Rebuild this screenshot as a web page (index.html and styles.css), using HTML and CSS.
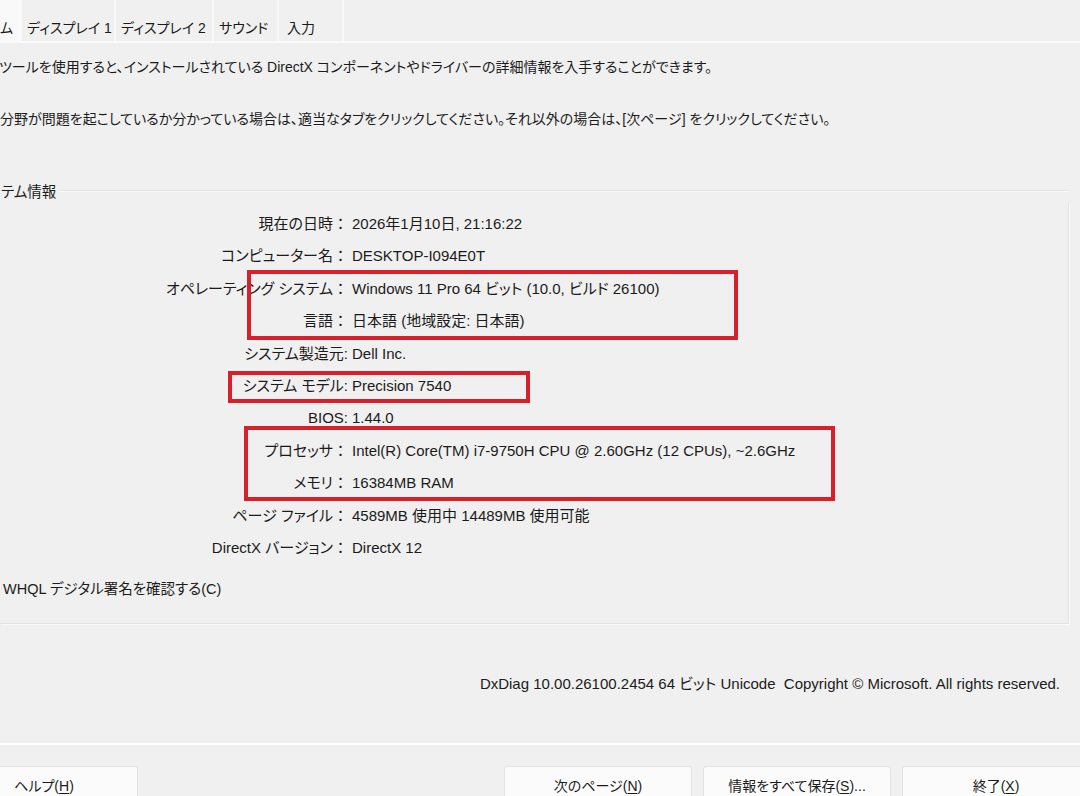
FILE: index.html
```html
<!doctype html>
<html lang="ja">

<head>
  <meta charset="utf-8">
  <title>DirectX 診断ツール</title>
  <meta name="viewport" content="width=device-width, initial-scale=1">
  <link rel="stylesheet" href="styles.css">
</head>

<body>
  <div class="window">

    <ul class="tabs">
      <li class="tab tab_active">ム</li>
      <li class="tab tab_display1">ディスプレイ 1</li>
      <li class="tab tab_display2">ディスプレイ 2</li>
      <li class="tab tab_sound">サウンド</li>
      <li class="tab tab_input">入力</li>
    </ul>

    <div class="panel">
      <p class="intro intro_first">ツールを使用すると、インストールされている DirectX コンポーネントやドライバーの詳細情報を入手することができます。</p>
      <p class="intro intro_second">分野が問題を起こしているか分かっている場合は、適当なタブをクリックしてください。それ以外の場合は、[次ページ] をクリックしてください。</p>

      <div class="group">
        <div class="group_head">
          <span class="group_title">テム情報</span>
          <span class="group_rule"></span>
        </div>
        <div class="group_body">
          <dl class="info">
            <dt>現在の日時<span class="colon">：</span></dt><dd>2026年1月10日, 21:16:22</dd>
            <dt>コンピューター名<span class="colon">：</span></dt><dd>DESKTOP-I094E0T</dd>
            <dt>オペレーティング システム<span class="colon">：</span></dt><dd>Windows 11 Pro 64 ビット (10.0, ビルド 26100)</dd>
            <dt>言語<span class="colon">：</span></dt><dd>日本語 (地域設定: 日本語)</dd>
            <dt>システム製造元:</dt><dd>Dell Inc.</dd>
            <dt>システム モデル:</dt><dd>Precision 7540</dd>
            <dt>BIOS:</dt><dd>1.44.0</dd>
            <dt>プロセッサ<span class="colon">：</span></dt><dd>Intel(R) Core(TM) i7-9750H CPU @ 2.60GHz (12 CPUs), ~2.6GHz</dd>
            <dt>メモリ<span class="colon">：</span></dt><dd>16384MB RAM</dd>
            <dt>ページ ファイル<span class="colon">：</span></dt><dd>4589MB 使用中 14489MB 使用可能</dd>
            <dt>DirectX バージョン<span class="colon">：</span></dt><dd>DirectX 12</dd>
          </dl>
          <p class="whql">WHQL デジタル署名を確認する(C)</p>
        </div>
      </div>

      <p class="version">DxDiag 10.00.26100.2454 64 ビット Unicode&nbsp; Copyright © Microsoft. All rights reserved.</p>
    </div>

    <div class="buttons">
      <button class="btn">ヘルプ(<u>H</u>)</button>
      <span class="buttons_space"></span>
      <button class="btn">次のページ(<u>N</u>)</button>
      <button class="btn">情報をすべて保存(<u>S</u>)...</button>
      <button class="btn">終了(<u>X</u>)</button>
    </div>

    <!-- annotation boxes -->
    <div class="mark mark_os"></div>
    <div class="mark mark_model"></div>
    <div class="mark mark_cpu"></div>
  </div>
</body>

</html>
```

FILE: styles.css
```css
* {
  margin: 0;
  padding: 0;
  box-sizing: border-box;
}

html,
body {
  background: #f0f0f0;
}

body {
  font-family: "Liberation Sans", "Noto Sans CJK JP", sans-serif;
  font-size: 15px;
  line-height: 22px;
  color: #1b1b1b;
  font-feature-settings: "palt";
}

.window {
  position: relative;
  width: 1080px;
  height: 796px;
  overflow: hidden;
}

/* tabs */

.tabs {
  display: flex;
  height: 41px;
  list-style: none;
  font-size: 14px;
}

.tab {
  padding: 17px 0 0 5px;
  background: #f0f0f0;
  border-right: 2px solid #f8f8f8;
  white-space: nowrap;
}

.tab_active {
  width: 22px;
  padding-left: 0;
  background: #f9f9f9;
  border-right: none;
  margin-bottom: -2px;
}

.tab_display1 {
  width: 94px;
}

.tab_display2 {
  width: 98px;
}

.tab_sound {
  width: 65px;
}

.tab_input {
  width: 65px;
  padding-left: 8px;
}

/* panel */

.panel {
  height: 704px;
  border-top: 2px solid #fafafa;
  border-bottom: 2px solid #fbfbfb;
}

.intro {
  font-size: 14px;
  white-space: nowrap;
}

.intro_first {
  margin-top: 13px;
  margin-left: -1px;
}

.intro_second {
  margin-top: 30px;
}

.group {
  margin-top: 51px;
  margin-right: 11px;
}

.group_head {
  display: flex;
  align-items: center;
  gap: 4px;
}

.group_title {
  padding-left: 1px;
  font-size: 14.5px;
}

.group_rule {
  flex: 1;
  height: 2px;
  border-top: 1px solid #e2e2e2;
  border-bottom: 1px solid #fafafa;
  margin-top: -3px;
}

.group_body {
  height: 421px;
  padding-top: 10px;
  border-right: 1px solid #e2e2e2;
  border-bottom: 1px solid #e2e2e2;
  box-shadow: 1px 1px 0 #fafafa;
}

.info {
  display: grid;
  grid-template-columns: 348px 1fr;
  column-gap: 4px;
  row-gap: 10.4px;
}

.info dt {
  text-align: right;
  white-space: nowrap;
}

.info dd {
  white-space: nowrap;
}

.colon {
  font-feature-settings: normal;
}

.whql {
  margin-top: 19px;
  padding-left: 3px;
  font-size: 14.5px;
}

.version {
  margin-top: 49px;
  padding-right: 20px;
  text-align: right;
}

/* bottom buttons */

.buttons {
  display: flex;
  gap: 11px;
  margin-top: 21px;
  margin-left: -50px;
  width: 1140px;
}

.buttons_space {
  flex: 1;
}

.btn {
  width: 188px;
  height: 44px;
  padding-bottom: 4px;
  background: #fbfbfb;
  border: 1px solid #e3e3e3;
  border-radius: 3px;
  font: inherit;
  font-size: 14px;
  color: inherit;
}

.btn u {
  text-underline-offset: 2px;
}

/* red annotation frames */

.mark {
  position: absolute;
  border: 4px solid #d9202a;
}

.mark_os {
  left: 247px;
  top: 270px;
  width: 491px;
  height: 70px;
}

.mark_model {
  left: 228px;
  top: 371px;
  width: 302px;
  height: 32px;
}

.mark_cpu {
  left: 244px;
  top: 426px;
  width: 591px;
  height: 75px;
}
```
